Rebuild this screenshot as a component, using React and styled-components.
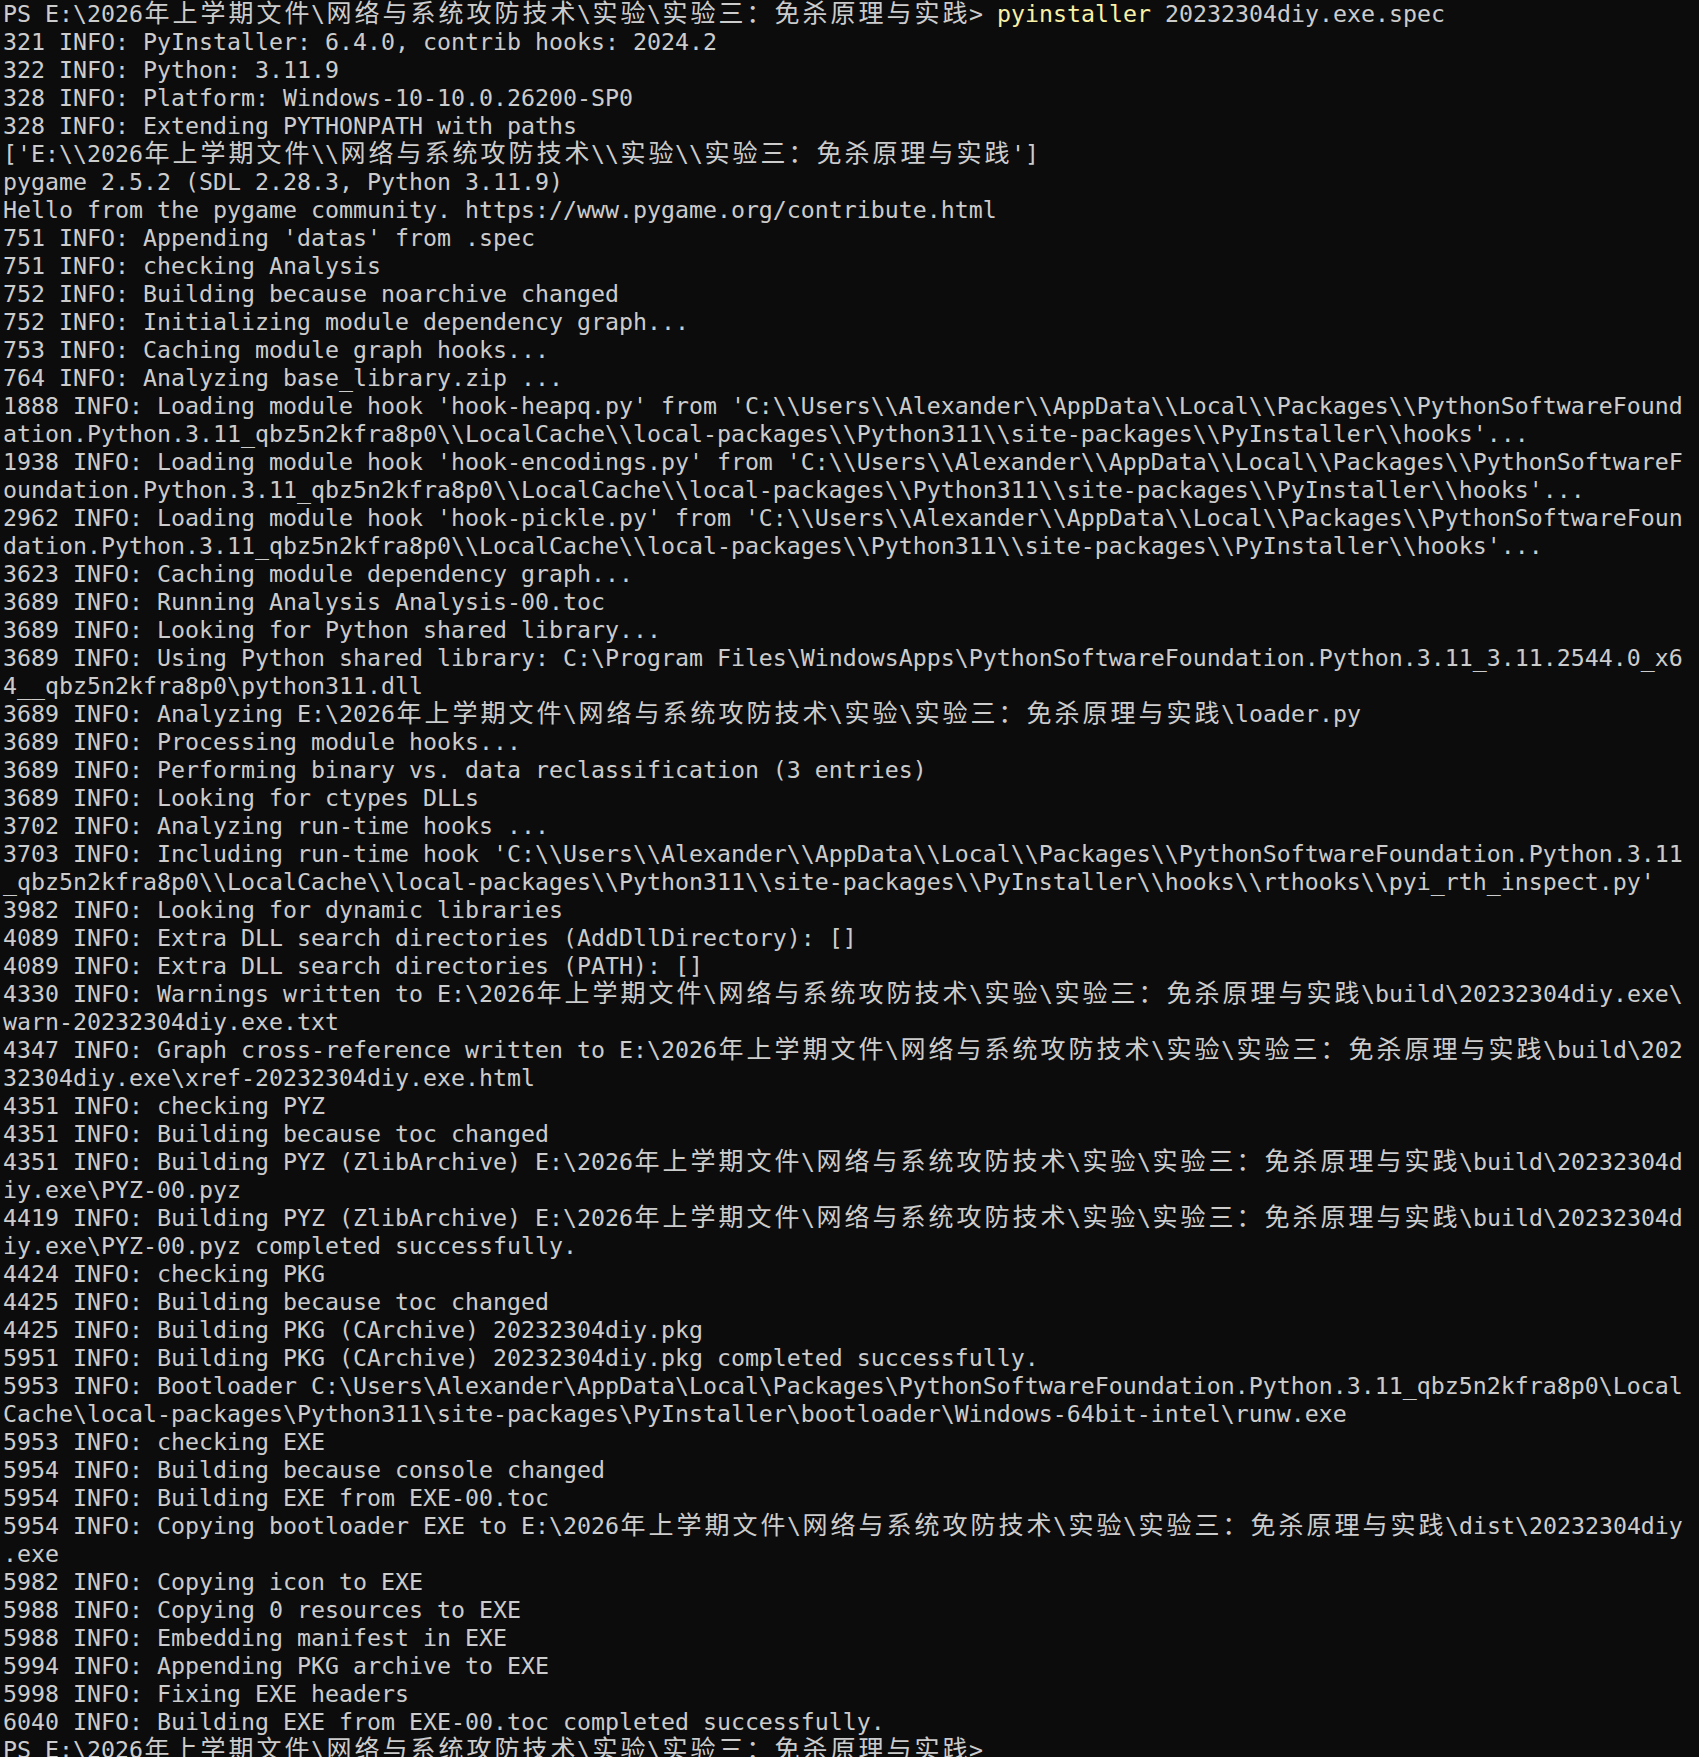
import React from 'react'
import styled, { createGlobalStyle } from 'styled-components'

const GlobalStyle = createGlobalStyle`
  html, body {
    margin: 0;
    padding: 0;
    background: #0c0c0c;
  }
`

const PROMPT = 'PS E:\\2026年上学期文件\\网络与系统攻防技术\\实验\\实验三：免杀原理与实践>'

const lines = [
  '321 INFO: PyInstaller: 6.4.0, contrib hooks: 2024.2',
  '322 INFO: Python: 3.11.9',
  '328 INFO: Platform: Windows-10-10.0.26200-SP0',
  '328 INFO: Extending PYTHONPATH with paths',
  "['E:\\\\2026年上学期文件\\\\网络与系统攻防技术\\\\实验\\\\实验三：免杀原理与实践']",
  'pygame 2.5.2 (SDL 2.28.3, Python 3.11.9)',
  'Hello from the pygame community. https://www.pygame.org/contribute.html',
  "751 INFO: Appending 'datas' from .spec",
  '751 INFO: checking Analysis',
  '752 INFO: Building because noarchive changed',
  '752 INFO: Initializing module dependency graph...',
  '753 INFO: Caching module graph hooks...',
  '764 INFO: Analyzing base_library.zip ...',
  "1888 INFO: Loading module hook 'hook-heapq.py' from 'C:\\\\Users\\\\Alexander\\\\AppData\\\\Local\\\\Packages\\\\PythonSoftwareFound",
  "ation.Python.3.11_qbz5n2kfra8p0\\\\LocalCache\\\\local-packages\\\\Python311\\\\site-packages\\\\PyInstaller\\\\hooks'...",
  "1938 INFO: Loading module hook 'hook-encodings.py' from 'C:\\\\Users\\\\Alexander\\\\AppData\\\\Local\\\\Packages\\\\PythonSoftwareF",
  "oundation.Python.3.11_qbz5n2kfra8p0\\\\LocalCache\\\\local-packages\\\\Python311\\\\site-packages\\\\PyInstaller\\\\hooks'...",
  "2962 INFO: Loading module hook 'hook-pickle.py' from 'C:\\\\Users\\\\Alexander\\\\AppData\\\\Local\\\\Packages\\\\PythonSoftwareFoun",
  "dation.Python.3.11_qbz5n2kfra8p0\\\\LocalCache\\\\local-packages\\\\Python311\\\\site-packages\\\\PyInstaller\\\\hooks'...",
  '3623 INFO: Caching module dependency graph...',
  '3689 INFO: Running Analysis Analysis-00.toc',
  '3689 INFO: Looking for Python shared library...',
  '3689 INFO: Using Python shared library: C:\\Program Files\\WindowsApps\\PythonSoftwareFoundation.Python.3.11_3.11.2544.0_x6',
  '4__qbz5n2kfra8p0\\python311.dll',
  '3689 INFO: Analyzing E:\\2026年上学期文件\\网络与系统攻防技术\\实验\\实验三：免杀原理与实践\\loader.py',
  '3689 INFO: Processing module hooks...',
  '3689 INFO: Performing binary vs. data reclassification (3 entries)',
  '3689 INFO: Looking for ctypes DLLs',
  '3702 INFO: Analyzing run-time hooks ...',
  "3703 INFO: Including run-time hook 'C:\\\\Users\\\\Alexander\\\\AppData\\\\Local\\\\Packages\\\\PythonSoftwareFoundation.Python.3.11",
  "_qbz5n2kfra8p0\\\\LocalCache\\\\local-packages\\\\Python311\\\\site-packages\\\\PyInstaller\\\\hooks\\\\rthooks\\\\pyi_rth_inspect.py'",
  '3982 INFO: Looking for dynamic libraries',
  '4089 INFO: Extra DLL search directories (AddDllDirectory): []',
  '4089 INFO: Extra DLL search directories (PATH): []',
  '4330 INFO: Warnings written to E:\\2026年上学期文件\\网络与系统攻防技术\\实验\\实验三：免杀原理与实践\\build\\20232304diy.exe\\',
  'warn-20232304diy.exe.txt',
  '4347 INFO: Graph cross-reference written to E:\\2026年上学期文件\\网络与系统攻防技术\\实验\\实验三：免杀原理与实践\\build\\202',
  '32304diy.exe\\xref-20232304diy.exe.html',
  '4351 INFO: checking PYZ',
  '4351 INFO: Building because toc changed',
  '4351 INFO: Building PYZ (ZlibArchive) E:\\2026年上学期文件\\网络与系统攻防技术\\实验\\实验三：免杀原理与实践\\build\\20232304d',
  'iy.exe\\PYZ-00.pyz',
  '4419 INFO: Building PYZ (ZlibArchive) E:\\2026年上学期文件\\网络与系统攻防技术\\实验\\实验三：免杀原理与实践\\build\\20232304d',
  'iy.exe\\PYZ-00.pyz completed successfully.',
  '4424 INFO: checking PKG',
  '4425 INFO: Building because toc changed',
  '4425 INFO: Building PKG (CArchive) 20232304diy.pkg',
  '5951 INFO: Building PKG (CArchive) 20232304diy.pkg completed successfully.',
  '5953 INFO: Bootloader C:\\Users\\Alexander\\AppData\\Local\\Packages\\PythonSoftwareFoundation.Python.3.11_qbz5n2kfra8p0\\Local',
  'Cache\\local-packages\\Python311\\site-packages\\PyInstaller\\bootloader\\Windows-64bit-intel\\runw.exe',
  '5953 INFO: checking EXE',
  '5954 INFO: Building because console changed',
  '5954 INFO: Building EXE from EXE-00.toc',
  '5954 INFO: Copying bootloader EXE to E:\\2026年上学期文件\\网络与系统攻防技术\\实验\\实验三：免杀原理与实践\\dist\\20232304diy',
  '.exe',
  '5982 INFO: Copying icon to EXE',
  '5988 INFO: Copying 0 resources to EXE',
  '5988 INFO: Embedding manifest in EXE',
  '5994 INFO: Appending PKG archive to EXE',
  '5998 INFO: Fixing EXE headers',
  '6040 INFO: Building EXE from EXE-00.toc completed successfully.',
]

// terminal grid: 14px cells, 28px rows
const Screen = styled.div`
  background: #0c0c0c;
  color: #cccccc;
  padding: 0 0 0 3px;
  font-family: "DejaVu Sans Mono", "Liberation Mono", monospace;
  font-size: 23.25px;
  min-height: 1757px;
  box-sizing: border-box;
`

const Row = styled.div`
  height: 28px;
  line-height: 28px;
  white-space: pre;
`

// wide (CJK) glyph takes two cells
const Cell = styled.span`
  display: inline-block;
  width: 28px;
  height: 28px;
  text-align: center;
  font-family: "Noto Sans CJK SC", sans-serif;
  font-size: 25px;
  line-height: 22px;
  vertical-align: top;
`

const Command = styled.span`
  color: #f9f1a5;
`

const WIDE = /([\u3000-\u9fff\uff00-\uffef]+)/

function Text({ value }) {
  return value.split(WIDE).map((part, i) =>
    i % 2 === 1
      ? [...part].map((ch, j) => <Cell key={`${i}-${j}`}>{ch}</Cell>)
      : <React.Fragment key={i}>{part}</React.Fragment>
  )
}

export default function App() {
  return (
    <>
      <GlobalStyle />
      <Screen>
        <Row>
          <Text value={PROMPT} /> <Command>pyinstaller</Command> 20232304diy.exe.spec
        </Row>
        {lines.map((line, i) => (
          <Row key={i}>
            <Text value={line} />
          </Row>
        ))}
        <Row>
          <Text value={PROMPT} />
        </Row>
      </Screen>
    </>
  )
}
